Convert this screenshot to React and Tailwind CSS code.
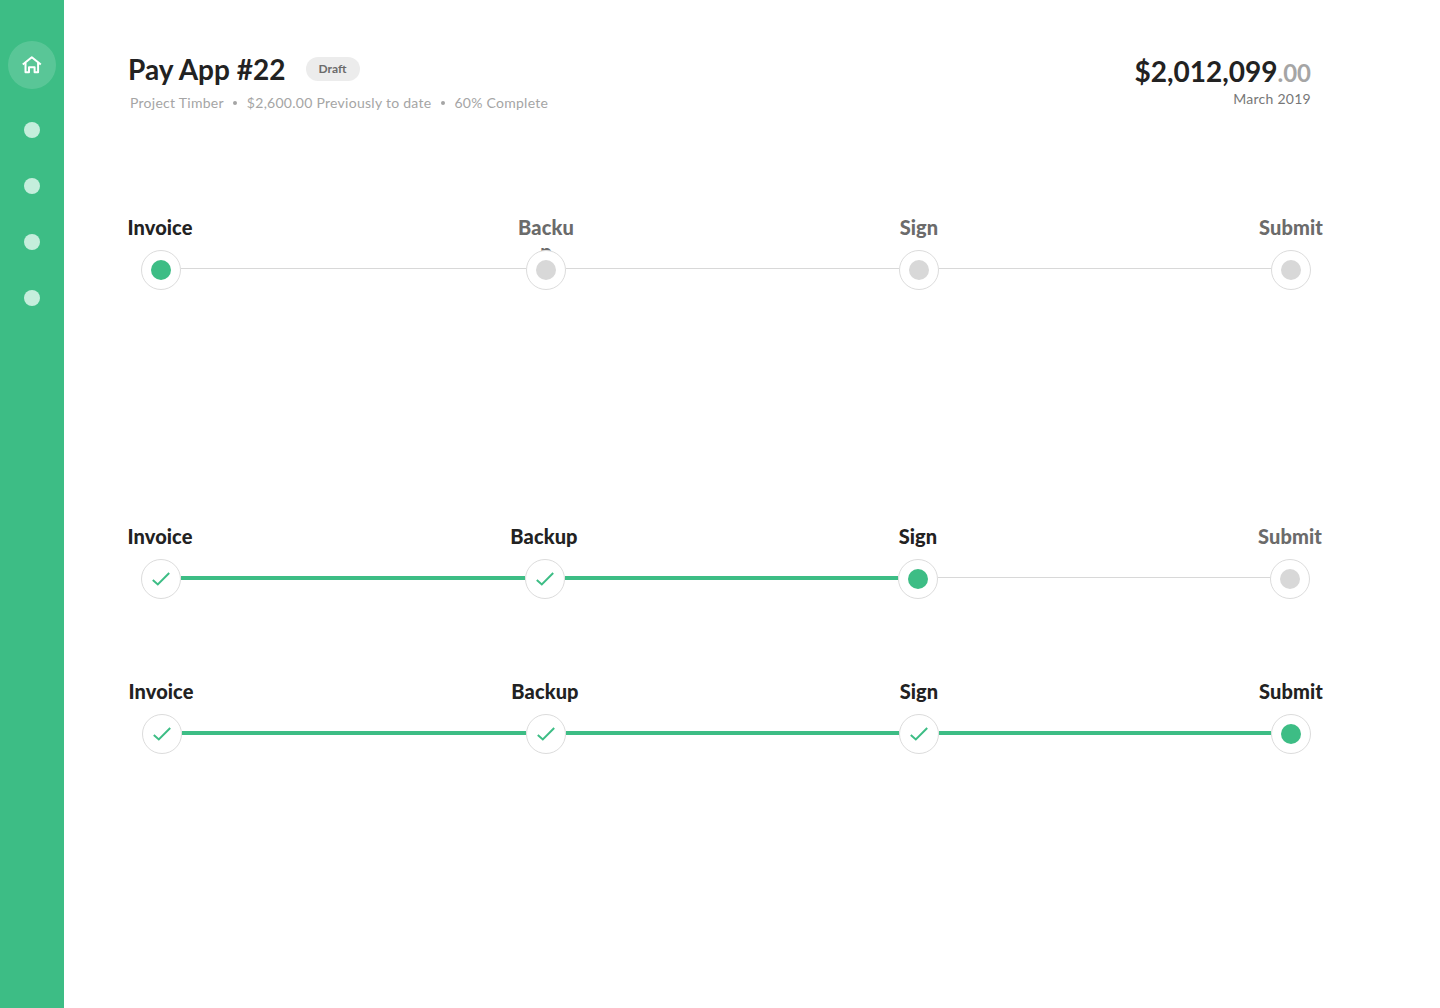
import clsx from 'clsx';

const LABELS = ['Invoice', 'Backup', 'Sign', 'Submit'];

function HomeIcon() {
  return (
    <svg width="20" height="18" viewBox="0 0 20 18" fill="none" stroke="white" strokeWidth="2" strokeLinejoin="round">
      <path d="M0.8 8.6 9.8 1.2 18.8 8.6" />
      <path d="M3.5 7v9.2h3.5v-5h5.6v5h3.5V7" />
    </svg>
  );
}

function CheckIcon() {
  return (
    <svg width="18" height="14" viewBox="0 0 18 14" fill="none" stroke="#3dbd85" strokeWidth="2">
      <path d="M0.8 8 5.8 12.4 17.2 1" />
    </svg>
  );
}

function Step({ label, state, clipped }) {
  const active = state !== 'todo';
  const wide = label === 'Invoice' || label === 'Backup';
  return (
    <div className="w-10 shrink-0 flex flex-col items-center">
      <div className="w-10 h-6 flex justify-center">
        <div
          className={clsx(
            'shrink-0 text-[20px] leading-6 font-black tracking-[0.1px] text-center',
            clipped ? 'w-[60px] break-all' : 'whitespace-nowrap',
            wide && !clipped && 'mr-0.5',
            active ? 'text-[#222222]' : 'text-[#6b6b6b]',
          )}
        >
          {label}
        </div>
      </div>
      <div className="relative mt-[11px] w-10 h-10 rounded-full border border-[#dcdcdc] bg-white flex items-center justify-center">
        {state === 'done' && <CheckIcon />}
        {state === 'current' && <div className="w-5 h-5 rounded-full bg-[#3dbd85]" />}
        {state === 'todo' && <div className="w-5 h-5 rounded-full bg-[#d8d8d8]" />}
      </div>
    </div>
  );
}

function Connector({ width, filled }) {
  return (
    <div
      style={{ width }}
      className={clsx('shrink-0', filled ? 'mt-[52px] h-1 bg-[#3dbd85]' : 'mt-[53px] h-px bg-[#d8d8d8]')}
    />
  );
}

function Stepper({ current, gaps, clipBackup, className }) {
  return (
    <div className={clsx('flex items-start', className)}>
      {LABELS.map((label, i) => (
        <div key={label} className="contents">
          <Step
            label={label}
            clipped={clipBackup && label === 'Backup'}
            state={i < current ? 'done' : i === current ? 'current' : 'todo'}
          />
          {i < 3 && <Connector width={gaps[i]} filled={i < current} />}
        </div>
      ))}
    </div>
  );
}

export default function App() {
  return (
    <div className="min-h-[1008px] flex bg-white font-['Lato','Liberation_Sans',sans-serif]">
      <aside className="w-16 shrink-0 bg-[#3dbd85] flex flex-col items-center pt-[41px]">
        <div className="w-12 h-12 rounded-full bg-white/15 flex items-center justify-center">
          <HomeIcon />
        </div>
        <div className="mt-[33px] flex flex-col gap-10">
          <div className="w-4 h-4 rounded-full bg-[#c5eedc]" />
          <div className="w-4 h-4 rounded-full bg-[#c5eedc]" />
          <div className="w-4 h-4 rounded-full bg-[#c5eedc]" />
          <div className="w-4 h-4 rounded-full bg-[#c5eedc]" />
        </div>
      </aside>

      <main className="flex-1 pl-16 pt-[51px]">
        <header className="w-[1183px] flex justify-between items-start">
          <div>
            <div className="flex items-center h-9">
              <h1 className="w-[157px] whitespace-nowrap text-[28px] leading-9 font-bold text-[#222222]">Pay App #22</h1>
              <span className="ml-[21px] w-[54px] h-6 pr-px rounded-full bg-[#ececec] text-xs font-bold text-[#6b6b6b] flex items-center justify-center">
                Draft
              </span>
            </div>
            <div className="mt-1.5 pl-0.5 flex items-center text-sm leading-5 tracking-[0.27px] text-[#a5a5a5]">
              <span>Project Timber</span>
              <span className="mx-[9.5px] w-1 h-1 rounded-full bg-[#a5a5a5]" />
              <span>$2,600.00 Previously to date</span>
              <span className="mx-[9.5px] w-1 h-1 rounded-full bg-[#a5a5a5]" />
              <span>60% Complete</span>
            </div>
          </div>
          <div className="pt-0.5 text-right">
            <div className="text-[28px] leading-9 font-bold text-[#222222]">
              $2,012,099<span className="text-[24px] leading-none text-[#a5a5a5]">.00</span>
            </div>
            <div className="text-sm leading-5 tracking-[0.27px] text-[#777777]">March 2019</div>
          </div>
        </header>

        <Stepper current={0} gaps={[345, 333, 332]} clipBackup className="mt-[102px] ml-[13px]" />
        <Stepper current={2} gaps={[344, 333, 332]} className="mt-[234px] ml-[13px]" />
        <Stepper current={3} gaps={[344, 333, 332]} className="mt-[80px] ml-[14px]" />
      </main>
    </div>
  );
}
